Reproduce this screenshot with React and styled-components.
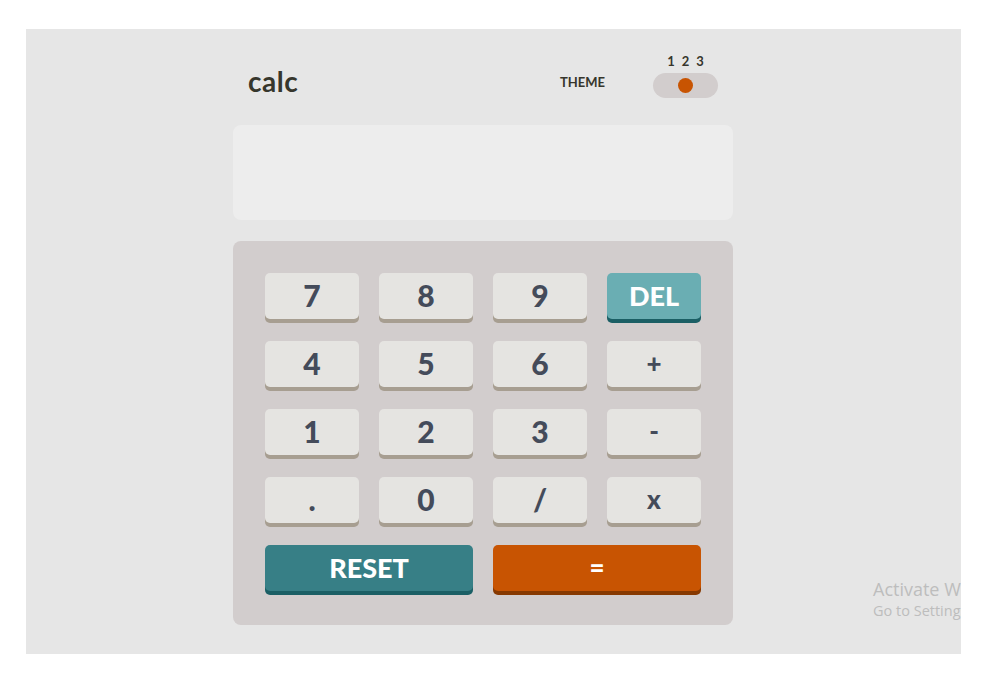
import React from 'react';
import styled, { createGlobalStyle } from 'styled-components';

const GlobalStyle = createGlobalStyle`
  body {
    margin: 0;
    background: #ffffff;
    font-family: "Lato", "Noto Sans", sans-serif;
  }
`;

const Frame = styled.div`
  position: relative;
  margin: 29px 0 0 26px;
  width: 935px;
  height: 625px;
  background: #e6e6e6;
  overflow: hidden;
  box-sizing: border-box;
  padding: 25px 0 0 207px;
`;

const Calculator = styled.div`
  width: 500px;
`;

const Header = styled.header`
  display: flex;
  align-items: flex-end;
  justify-content: space-between;
  padding: 0 15px;
  margin-bottom: 27px;
  color: #36362c;
`;

const Logo = styled.h1`
  margin: 0 0 3px;
  font-size: 28px;
  line-height: 28px;
  font-weight: 700;
  letter-spacing: 0.5px;
`;

const ThemeGroup = styled.div`
  display: flex;
  align-items: flex-end;
  gap: 48px;
`;

const ThemeLabel = styled.span`
  font-size: 13px;
  font-weight: 700;
  margin-bottom: 8px;
`;

const ToggleColumn = styled.div`
  display: flex;
  flex-direction: column;
  align-items: center;
  gap: 5px;
`;

const Numbers = styled.div`
  display: flex;
  gap: 7px;
  font-size: 13px;
  font-weight: 700;
  line-height: 14px;
`;

const Toggle = styled.div`
  width: 65px;
  height: 25px;
  border-radius: 13px;
  background: #d2cdcd;
  display: flex;
  align-items: center;
  justify-content: center;
`;

const Knob = styled.span`
  width: 15px;
  height: 15px;
  border-radius: 50%;
  background: #c85402;
`;

const Screen = styled.div`
  height: 95px;
  border-radius: 8px;
  background: #ededed;
  margin-bottom: 21px;
`;

const Keypad = styled.div`
  display: grid;
  grid-template-columns: repeat(4, 94px);
  column-gap: 20px;
  row-gap: 18px;
  padding: 32px 32px 30px;
  border-radius: 8px;
  background: #d2cdcd;
`;

const variants = {
  num: { bg: '#e5e4e1', shadow: '#a79e91', color: '#444b5a' },
  del: { bg: '#6aaeb3', shadow: '#1b5f65', color: '#ffffff' },
  reset: { bg: '#377f86', shadow: '#1b5f65', color: '#ffffff' },
  equal: { bg: '#c85402', shadow: '#873901', color: '#ffffff' },
};

const Key = styled.button`
  grid-column: span ${p => p.$span || 1};
  height: 46px;
  margin-bottom: 4px;
  border: none;
  border-radius: 5px;
  background: ${p => variants[p.$variant].bg};
  box-shadow: 0 4px 0 ${p => variants[p.$variant].shadow};
  color: ${p => variants[p.$variant].color};
  font-family: "Lato", "Noto Sans", sans-serif;
  font-weight: 900;
  font-size: ${p => p.$size || 30}px;
  line-height: 1;
  padding: 0 0 2px;
  cursor: pointer;
`;

const Watermark = styled.div`
  position: absolute;
  left: 847px;
  top: 548px;
  white-space: nowrap;
  color: #bdbdbd;
  font-family: "Open Sans", "Noto Sans", sans-serif;
  p {
    margin: 0;
  }
  .big {
    font-size: 18px;
    line-height: 24px;
  }
  .small {
    font-size: 14.5px;
    line-height: 20px;
  }
`;

const keys = [
  { label: '7' }, { label: '8' }, { label: '9' }, { label: 'DEL', variant: 'del', size: 27 },
  { label: '4' }, { label: '5' }, { label: '6' }, { label: '+', size: 26 },
  { label: '1' }, { label: '2' }, { label: '3' }, { label: '-', size: 26 },
  { label: '.' }, { label: '0' }, { label: '/' }, { label: 'x', size: 26 },
  { label: 'RESET', variant: 'reset', span: 2, size: 27 },
  { label: '=', variant: 'equal', span: 2, size: 26 },
];

export default function App() {
  return (
    <>
      <GlobalStyle />
      <Frame>
        <Calculator>
          <Header>
            <Logo>calc</Logo>
            <ThemeGroup>
              <ThemeLabel>THEME</ThemeLabel>
              <ToggleColumn>
                <Numbers>
                  <span>1</span>
                  <span>2</span>
                  <span>3</span>
                </Numbers>
                <Toggle>
                  <Knob />
                </Toggle>
              </ToggleColumn>
            </ThemeGroup>
          </Header>
          <Screen />
          <Keypad>
            {keys.map(k => (
              <Key key={k.label} $variant={k.variant || 'num'} $span={k.span} $size={k.size}>
                {k.label}
              </Key>
            ))}
          </Keypad>
        </Calculator>
        <Watermark>
          <p className="big">Activate Windows</p>
          <p className="small">Go to Settings to activate Windows.</p>
        </Watermark>
      </Frame>
    </>
  );
}
